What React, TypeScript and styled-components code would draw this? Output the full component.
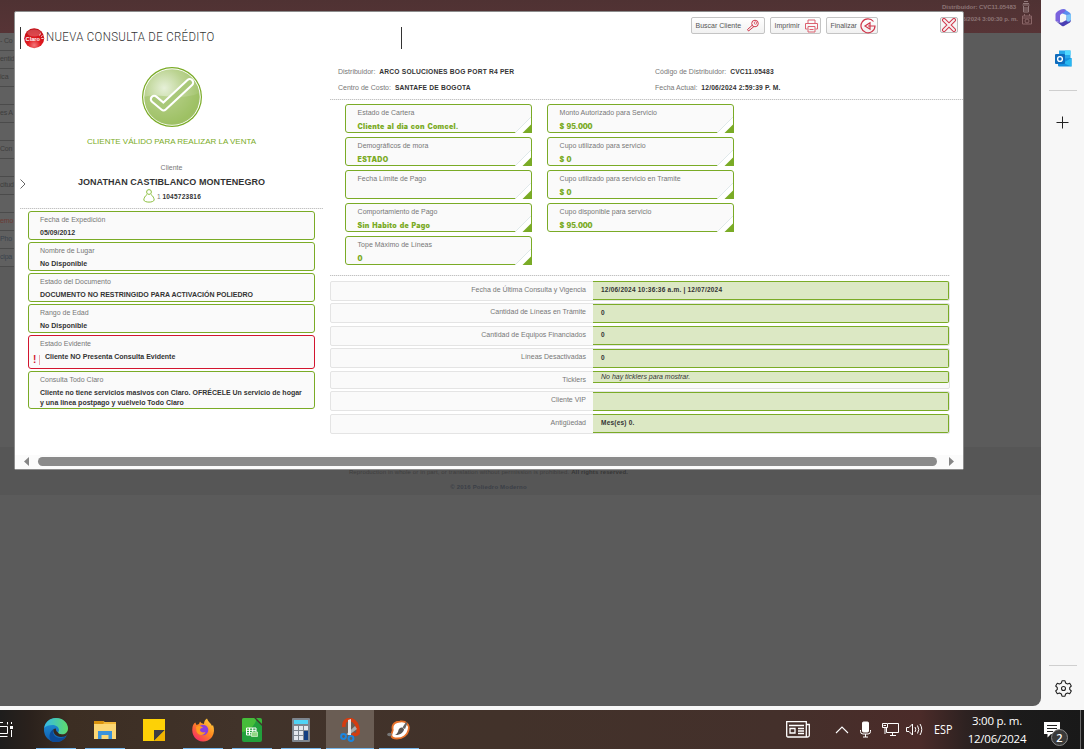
import React from "react";
import styled, { createGlobalStyle } from "styled-components";

const GREEN = "#7aab26";
const RED = "#d2152f";

const Global = createGlobalStyle`
  * { box-sizing: border-box; }
  html, body { margin: 0; padding: 0; overflow: hidden; }
  body { font-family: "Liberation Sans", Arial, sans-serif; font-size: 7px; color: #333; }
  svg { display: block; flex: none; }
`;

const Screen = styled.div`
  width: 1084px;
  height: 749px;
  display: flex;
  flex-direction: column;
  background: #f7f7f7;
`;
const Browser = styled.div`
  height: 710px;
  display: flex;
  align-items: flex-start;
`;
const Page = styled.div`
  position: relative;
  width: 1041px;
  height: 706px;
  background: #5b5b5b;
  border-bottom-right-radius: 8px;
  overflow: hidden;
  display: flex;
  flex-direction: column;
`;

/* dimmed page behind the dialog */
const PageHeader = styled.header`
  height: 33px;
  background: linear-gradient(#4f3233, #573436);
  display: flex;
  flex-direction: column;
  align-items: flex-end;
  padding: 1px 8px 0 0;
`;
const HeaderLine = styled.div`
  display: flex;
  align-items: center;
  gap: 3px;
  height: 12px;
  font-size: 6px;
  font-weight: 700;
  letter-spacing: -0.04px;
  color: #8d7576;
`;
const SideMenu = styled.nav`
  height: 414px;
  width: 14px;
  overflow: hidden;
`;
const SideItem = styled.div<{ $tone?: string }>`
  height: 18px;
  line-height: 16px;
  border-bottom: 1px solid #4b4b4b;
  background: #606060;
  font-size: 7px;
  letter-spacing: -0.2px;
  white-space: nowrap;
  color: ${(p) => p.$tone ?? "#3d3d3d"};
`;
const PageFooter = styled.footer`
  height: 48px;
  background: #565656;
  display: flex;
  flex-direction: column;
  align-items: center;
  padding: 18px 64px 0 0;
  font-size: 6px;
  line-height: 15px;
  color: #3e3e3e;
`;
const Legal = styled.div`
  letter-spacing: 0.13px;
  strong { color: #363636; }
`;
const Copyright = styled.div`
  font-weight: 700;
  color: #3b3f47;
  letter-spacing: 0.2px;
`;

/* dialog */
const Dialog = styled.section`
  position: absolute;
  left: 14px;
  top: 11px;
  width: 950px;
  height: 459px;
  background: #fff;
  border: 1px solid #8c8c8c;
  border-radius: 2px;
  display: flex;
  flex-direction: column;
`;
const DialogHeader = styled.div`
  height: 48px;
  display: flex;
  align-items: flex-start;
  padding-left: 5px;
`;
const TitleBox = styled.div`
  width: 382px;
  height: 22px;
  margin-top: 15px;
  border-left: 1px solid #333;
  border-right: 1px solid #333;
  display: flex;
  align-items: center;
  padding-left: 3px;
`;
const Title = styled.h1`
  margin: 0 0 4px 1px;
  font: 300 13.5px/20px Roboto, "Liberation Sans", sans-serif;
  letter-spacing: 0.4px;
  color: #333;
  white-space: nowrap;
  transform: scaleX(0.848);
  transform-origin: left center;
`;
const Actions = styled.div`
  display: flex;
  gap: 5px;
  margin: 5px 0 0 289px;
`;
const Action = styled.button<{ $w: number }>`
  width: ${(p) => p.$w}px;
  height: 17px;
  padding: 0 1px 0 3.5px;
  display: flex;
  align-items: center;
  justify-content: space-between;
  border: 1px solid #c4c4c4;
  border-radius: 2px;
  background: linear-gradient(#fff, #f1f1f1);
  font: 7px "Liberation Sans", Arial, sans-serif;
  color: #555;
  white-space: nowrap;
`;
const Close = styled.button`
  width: 18px;
  height: 16px;
  margin: 5px 0 0 62px;
  padding: 0;
  border: 1px solid #bcbcbc;
  border-radius: 2px;
  background: #f6f6f6;
  display: flex;
  align-items: center;
  justify-content: center;
`;
const Body = styled.div`
  height: 395px;
  display: flex;
  padding-left: 5px;
`;
const Summary = styled.div`
  width: 303px;
  display: flex;
  flex-direction: column;
  align-items: center;
`;
const Seal = styled.div`
  margin-top: 6px;
`;
const Status = styled.div`
  height: 22px;
  margin-top: 3px;
  line-height: 22px;
  font-size: 8px;
  letter-spacing: -0.01px;
  color: ${GREEN};
  white-space: nowrap;
`;
const Muted = styled.div`
  font-size: 7px;
  line-height: 10px;
  margin-top: 10px;
  color: #777;
`;
const ClientName = styled.div`
  font-size: 9px;
  font-weight: 700;
  line-height: 14px;
  margin-top: 2px;
  letter-spacing: 0.06px;
  color: #333;
  white-space: nowrap;
`;
const ClientId = styled.div`
  display: flex;
  align-items: center;
  gap: 2px;
  height: 14px;
  font-size: 6.5px;
  margin-left: 1px;
  color: #777;
  b { color: #333; letter-spacing: 0.25px; }
`;
const Dots = styled.div<{ $w: number }>`
  width: ${(p) => p.$w}px;
  height: 1px;
  flex: none;
  background: repeating-linear-gradient(90deg, #c2c2c2 0 1px, #ececec 1px 2px);
`;
const SummaryDots = styled(Dots)`
  margin-top: 5px;
`;
const CardList = styled.div`
  width: 287px;
  margin: 2px 0 0;
  display: flex;
  flex-direction: column;
  gap: 2px;
`;
const Card = styled.div<{ $h?: number; $alert?: boolean }>`
  height: ${(p) => p.$h ?? 29}px;
  border: 1px solid ${(p) => (p.$alert ? RED : GREEN)};
  border-radius: 3px;
  background: #fafafa;
  padding: 3px 10px 0 11px;
`;
const CardLabel = styled.div`
  font-size: 7px;
  line-height: 10px;
  color: #777;
  white-space: nowrap;
`;
const CardValue = styled.div`
  margin-top: 3px;
  font-size: 7px;
  line-height: 10px;
  font-weight: 700;
  color: #333;
  white-space: pre-line;
`;
const AlertValue = styled.div`
  display: flex;
  margin: 3px 0 0 -7px;
  font-size: 7px;
  line-height: 10px;
  font-weight: 700;
  color: #333;
`;
const AlertMark = styled.span`
  width: 7px;
  height: 10px;
  margin: 3px 5px 0 0;
  border-right: 1px solid #eca6ae;
  font-size: 10px;
  line-height: 10px;
  color: ${RED};
`;

const Detail = styled.div`
  width: 634px;
  margin-left: 7px;
  display: flex;
  flex-direction: column;
`;
const Facts = styled.div`
  height: 39px;
  padding: 4px 0 0 8px;
  display: grid;
  grid-template-columns: 317px 1fr;
  grid-auto-rows: 16px;
`;
const Fact = styled.div`
  font-size: 7px;
  line-height: 16px;
  color: #777;
  white-space: nowrap;
  b { color: #333; margin-left: 2px; font-size: 6.7px; letter-spacing: 0.18px; }
`;
const Quotas = styled.div`
  height: 175px;
  padding: 4px 0 0 15px;
  display: flex;
  gap: 15px;
`;
const QuotaColumn = styled.div`
  width: 187px;
  display: flex;
  flex-direction: column;
  gap: 4px;
`;
const QuotaCard = styled(Card)`
  position: relative;
  padding: 3px 0 0 11.6px;
  flex: none;
`;
const QuotaValue = styled.div<{ $amount: boolean }>`
  margin-top: 4px;
  font: 900 7px/10px Inter, "DejaVu Sans", sans-serif;
  letter-spacing: ${(p) => (p.$amount ? -0.12 : 0.26)}px;
  word-spacing: ${(p) => (p.$amount ? 1.2 : 1)}px;
  color: ${GREEN};
  white-space: nowrap;
`;
const Corner = styled.svg`
  position: absolute;
  right: -1px;
  bottom: -1px;
`;
const Table = styled.div`
  padding-top: 5px;
  width: 620px;
`;
const Row = styled.div<{ $h: number; $gap: number }>`
  height: ${(p) => p.$h}px;
  margin-bottom: ${(p) => p.$gap}px;
  border: 1px solid #e4e4e4;
  border-radius: 2px;
  background: #fafafa;
  display: flex;
`;
const RowLabel = styled.div`
  width: 262px;
  padding-right: 7px;
  text-align: right;
  font-size: 7px;
  line-height: 16px;
  color: #777;
`;
const RowValue = styled.div<{ $h: number; $drop: number; $note?: boolean }>`
  width: 356px;
  height: ${(p) => p.$h}px;
  margin-top: ${(p) => p.$drop}px;
  padding-left: 8px;
  border: solid ${GREEN};
  border-width: 1px 1px 1px 0;
  border-radius: 0 2px 2px 0;
  background: #dce8c4;
  font-size: ${(p) => (p.$note ? 7 : 6.5)}px;
  font-weight: ${(p) => (p.$note ? 400 : 700)};
  font-style: ${(p) => (p.$note ? "italic" : "normal")};
  line-height: ${(p) => (p.$note ? 10 : 16)}px;
  letter-spacing: ${(p) => (p.$note ? 0 : 0.22)}px;
  color: #333;
`;
const ScrollBar = styled.div`
  height: 14px;
  background: #fbfbfb;
  display: flex;
  align-items: flex-start;
  padding: 2px 9px 0 9px;
`;
const Thumb = styled.div`
  flex: 1;
  height: 9px;
  margin: 0 12px 0 9px;
  border-radius: 5px;
  background: #8a8a8a;
`;
const Expander = styled.svg`
  position: absolute;
  left: 5px;
  top: 167px;
`;

/* browser side strip */
const Strip = styled.aside`
  width: 43px;
  height: 706px;
  display: flex;
  flex-direction: column;
  align-items: center;
  padding: 9px 0 0 1px;
`;
const Rule = styled.div<{ $top: number }>`
  width: 28px;
  height: 1px;
  margin-top: ${(p) => p.$top}px;
  background: #cfcfcf;
`;
const StripIcon = styled.div<{ $top: number }>`
  margin-top: ${(p) => p.$top}px;
`;

/* task bar */
const TaskBar = styled.div`
  height: 39px;
  display: flex;
  align-items: stretch;
  background: linear-gradient(90deg, #1e1d1c 0, #2a211c 30px, #3c2e23 70px, #41332a 240px, #42322a 500px, #44302b 780px, #4b2b29 920px, #2e2221 965px, #1c1b1b 1010px, #191919 1084px);
`;
const Apps = styled.div`
  display: flex;
  width: 786px;
`;
const TaskView = styled.div`
  width: 32px;
  padding-top: 12px;
`;
const TaskApp = styled.div<{ $open?: boolean; $active?: boolean }>`
  width: ${(p) => (p.$active ? 48 : 49)}px;
  margin-right: ${(p) => (p.$active ? 1 : 0)}px;
  padding: 8px ${(p) => (p.$active ? 0 : 1)}px 0 0;
  display: flex;
  flex-direction: column;
  align-items: center;
  justify-content: space-between;
  background: ${(p) => (p.$active ? "#6a5d54" : "transparent")};
  &::after {
    content: "";
    width: ${(p) => (p.$active ? 48 : 40)}px;
    height: 1px;
    background: ${(p) => (p.$open ? "#78b8ec" : "transparent")};
  }
`;
const Tray = styled.div`
  flex: 1;
  display: flex;
  align-items: center;
  color: #fff;
`;
const TrayItem = styled.div<{ $w: number }>`
  width: ${(p) => p.$w}px;
  flex: none;
`;
const Lang = styled.div`
  width: 31px;
  font: 12px "Open Sans", "Noto Sans", sans-serif;
  transform: scaleX(0.9);
  transform-origin: left;
`;
const Clock = styled.div`
  width: 66px;
  margin: 0 0 0 -1px;
  text-align: center;
  font: 11.5px/18px "Open Sans", "Noto Sans", sans-serif;
  white-space: nowrap;
  letter-spacing: -0.25px;
`;
const Notices = styled.div`
  position: relative;
  width: 20px;
  height: 39px;
  margin-left: 14px;
  padding-top: 12px;
`;
const Badge = styled.span`
  position: absolute;
  left: 7px;
  top: 19px;
  width: 17px;
  height: 17px;
  border-radius: 50%;
  border: 1px solid #8a8a8a;
  background: #3a3a3a;
  font: 600 11px/15px "Open Sans", sans-serif;
  text-align: center;
`;
const DesktopEdge = styled.div`
  margin-left: 16px;
  width: 1px;
  align-self: stretch;
  background: #6a6a6a;
`;

const menu: { text: string; tone?: string }[] = [
  { text: "- Co" }, { text: "entid" }, { text: "ica" }, { text: "" },
  { text: "es A" }, { text: "" }, { text: "Con" }, { text: "" },
  { text: "citud" }, { text: "" }, { text: "erno", tone: "#6b3a34" },
  { text: "Pho", tone: "#39424d" }, { text: "cipa", tone: "#39424d" },
];

const quotaLeft = [
  ["Estado de Cartera", "Cliente al dia con Comcel."],
  ["Demográficos de mora", "ESTADO"],
  ["Fecha Límite de Pago", ""],
  ["Comportamiento de Pago", "Sin Habito de Pago"],
  ["Tope Máximo de Líneas", "0"],
];
const quotaRight = [
  ["Monto Autorizado para Servicio", "$ 95.000"],
  ["Cupo utilizado para servicio", "$ 0"],
  ["Cupo utilizado para servicio en Tramite", "$ 0"],
  ["Cupo disponible para servicio", "$ 95.000"],
];

const rows = [
  { label: "Fecha de Última Consulta y Vigencia", value: "12/06/2024 10:36:36 a.m. | 12/07/2024", h: 20, gap: 2, drop: -1, vh: 19 },
  { label: "Cantidad de Líneas en Trámite", value: "0", h: 20, gap: 3, drop: 0, vh: 19 },
  { label: "Cantidad de Equipos Financiados", value: "0", h: 20, gap: 2, drop: -1, vh: 19 },
  { label: "Líneas Desactivadas", value: "0", h: 20, gap: 3, drop: 0, vh: 19 },
  { label: "Ticklers", value: "No hay ticklers para mostrar.", h: 18, gap: 2, drop: -1, vh: 12, note: true },
  { label: "Cliente VIP", value: "", h: 20, gap: 3, drop: 0, vh: 19 },
  { label: "Antigüedad", value: "Mes(es) 0.", h: 20, gap: 0, drop: -1, vh: 19 },
];

const Quota = ({ label, value }: { label: string; value: string }) => (
  <QuotaCard>
    <CardLabel>{label}</CardLabel>
    <QuotaValue $amount={value.startsWith("$")}>{value}</QuotaValue>
    <Corner width="17" height="17" viewBox="0 0 17 17">
      <path d="M0 17L16 1V17Z" fill="#fff" />
      <path d="M0.5 16.5L16 1" stroke="#dfe8ea" />
      <path d="M16.5 0V10" stroke={GREEN} />
      <path d="M7.500 17L17 7.500V17Z" fill={GREEN} />
    </Corner>
  </QuotaCard>
);

const CheckSeal = () => (
  <svg width="62" height="62" viewBox="0 0 62 62">
    <defs>
      <radialGradient id="seal" cx="0.36" cy="0.34" r="0.65">
        <stop offset="0" stopColor="#e6f0d8" />
        <stop offset="0.55" stopColor="#bbd391" />
        <stop offset="1" stopColor="#a3c46d" />
      </radialGradient>
    </defs>
    <circle cx="31" cy="31" r="30" fill={GREEN} />
    <circle cx="31" cy="31" r="28.8" fill="#fff" />
    <circle cx="31" cy="31" r="27.8" fill="url(#seal)" />
    <path d="M3.5 31C16 26 40 36 58 27C60 45 48 58.8 31 58.8C14 58.8 3 46 3.5 31Z" fill="#96bb58" opacity="0.4" />
    <path d="M13.2 33.2L22.500 41L48.8 16.500" fill="none" stroke="#fff" strokeWidth="8.8" strokeLinecap="round" strokeLinejoin="round" />
    <path d="M13.2 33.2L22.500 41L48.8 16.500" fill="none" stroke="#a9c879" strokeWidth="4.6" strokeLinecap="round" strokeLinejoin="round" />
  </svg>
);

const ClaroLogo = () => (
  <svg width="21" height="21" viewBox="0 0 21 21">
    <defs>
      <radialGradient id="claro" cx="0.5" cy="0.85" r="0.8">
        <stop offset="0" stopColor="#f4777a" />
        <stop offset="0.4" stopColor="#e0191f" />
        <stop offset="1" stopColor="#c20d14" />
      </radialGradient>
    </defs>
    <circle cx="10.2" cy="10.2" r="10" fill="url(#claro)" />
    <ellipse cx="10.2" cy="5" rx="7" ry="3.5" fill="#fff" opacity="0.22" />
    <text x="1.6" y="12.6" fontSize="5.6" fontWeight="700" fill="#fff" fontFamily="Liberation Sans">Claro</text>
    <path d="M15.5 7.5L16.5 5.5M17 8.7L18.5 7.5M17.3 10.5H19.6" stroke="#fff" strokeWidth="0.8" />
  </svg>
);

const Edge = () => (
  <svg width="24" height="24" viewBox="0 0 24 24">
    <defs>
      <linearGradient id="eg" x1="0" x2="1"><stop offset="0" stopColor="#35b8e8" /><stop offset="1" stopColor="#5fdc6a" /></linearGradient>
      <linearGradient id="eb" x1="0" x2="0" y1="0" y2="1"><stop offset="0" stopColor="#2199dc" /><stop offset="1" stopColor="#0f5cae" /></linearGradient>
    </defs>
    <circle cx="12" cy="12" r="12" fill="url(#eb)" />
    <path d="M14 14.6C15 18 20 19 22.6 17.4L24.5 14V11L18 12Z" fill="#3c2e23" />
    <path d="M0.2 10C1 4 6 0 12 0C19 0 24 5 24 10.5C24 14 21.5 16.3 18 16.3C15.5 16.3 14 15.5 14 14.6C14 14 15 13.5 15 12C15 9.5 12.5 7 8.5 7C5 7 1.5 8 0.2 10Z" fill="url(#eg)" />
    <path d="M9 24C4 22 4.5 14 9.5 11C7.5 16 12 20.5 17 20C19.5 19.7 21 19 22 18.2C20 22 15 25 9 24Z" fill="#0c4a97" />
    <path d="M9.5 11C8.5 15 12 19 17 19C19.5 19 21.5 18.2 22.6 17.3C19 18 14.6 17 14 14.6C12.5 13.5 11.5 12 12 10.5Z" fill="#33271f" />
  </svg>
);
const Folder = () => (
  <svg width="22" height="24" viewBox="0 0 22 24">
    <path d="M0 3H9L11 4H22V21H0Z" fill="#f3b93b" />
    <path d="M0 3H9L10 5L9 6H0Z" fill="#d9930e" />
    <path d="M0 6H22V21H0Z" fill="#fbd775" />
    <path d="M4 13H18V21H14.5V17H7.5V21H4Z" fill="#3a93dc" />
  </svg>
);
const Sticky = () => (
  <svg width="22" height="24" viewBox="0 0 22 24">
    <path d="M0 1H22V23H0Z" fill="#fdd106" />
    <path d="M11 12H22L11 23Z" fill="#3d3d42" />
    <path d="M22 12V23H11Z" fill="#f0b400" />
  </svg>
);
const Firefox = () => (
  <svg width="24" height="24" viewBox="0 0 24 24">
    <defs><linearGradient id="ff" x1="1" y1="0" x2="0.2" y2="1"><stop offset="0" stopColor="#ffe14a" /><stop offset="0.5" stopColor="#ff8a1e" /><stop offset="1" stopColor="#f5276a" /></linearGradient></defs>
    <path d="M1.5 9C2 7 3 5 4.3 4.5L5.5 7L8 6L9 3.5C10 5 11 5.5 13 6C13 3.5 14 1.5 16 0.5C17 4 20 5 21 8L22 7C23.5 11 23.5 15 21 19C18.5 22.5 15 23.6 12 23.5C5 23.5 0 17 1.5 9Z" fill="url(#ff)" />
    <circle cx="12" cy="12" r="5.3" fill="#8a3fdd" />
    <path d="M5 9C7 7.5 10 8 12 9.5C10 10 9 11 9 12C9 14 12 15 14.5 14C13 18 7 18 5.5 13.5Z" fill="#ff9a20" />
  </svg>
);
const LibreCalc = () => (
  <svg width="20" height="24" viewBox="0 0 20 24">
    <path d="M2 0H12L20 8V22Q20 24 18 24H2Q0 24 0 22V2Q0 0 2 0Z" fill="#22a03c" />
    <path d="M0 14C8 14 14 5 14 2L12 0H2Q0 0 0 2Z" fill="#46bd3a" />
    <path d="M14 0H18Q20 0 20 2V6Z" fill="#37b53a" />
    <path d="M4.5 10H14V17H4.5ZM4.5 12.3H14M4.5 14.7H14M7.5 10V17M10.7 10V17" fill="none" stroke="#fff" />
    <path d="M9.5 14H15.5V18.5H9.5Z" fill="#8fd884" stroke="#d8f3d4" strokeWidth="0.7" />
  </svg>
);
const Calculator = () => (
  <svg width="18" height="24" viewBox="0 0 18 24">
    <rect width="18" height="24" rx="1" fill="#7d858e" />
    <rect x="2" y="2" width="14" height="4" fill="#4fd3f5" />
    {[8, 13, 18].map((y) => [2, 7].map((x) => <rect key={`${x}-${y}`} x={x} y={y} width="4" height="4" fill="#e3e8ee" />))}
    <rect x="12" y="8" width="4" height="4" fill="#e3e8ee" />
    <rect x="12" y="13" width="4" height="9" fill="#123f83" />
  </svg>
);
const Snip = () => (
  <svg width="20" height="24" viewBox="0 0 20 24">
    <path d="M4 9C3 3 7 1.500 10 1.500C15 2 19 8 18 15C17 17 14 17 12 15.500" fill="none" stroke="#d43c10" strokeWidth="3.6" />
    <path d="M15 8L6 16.500L9 17L17 11Z" fill="#a9adb0" />
    <path d="M8 2L11 1V17H8Z" fill="#e4e4e4" />
    <circle cx="3.5" cy="18.5" r="2.4" fill="none" stroke="#1a86e0" strokeWidth="2" />
    <circle cx="11" cy="20.5" r="2.4" fill="none" stroke="#1a86e0" strokeWidth="2" />
  </svg>
);
const Painter = () => (
  <svg width="24" height="24" viewBox="0 0 24 24">
    <path d="M4.500 18C3.500 15 7 13.500 5.500 10.500C5 6 9 3.500 13 3.500C19 2.500 23 7 21.500 12C20.500 17 16 20.500 10 20.500C7 20.500 5 20 4.500 18Z" fill="#fff" stroke="#e8722a" strokeWidth="1.8" />
    <path d="M11.500 12C12.500 9 15.500 8.500 17 11C17 14.500 12.500 17.500 8 17C10 16 11 14.500 11.500 12Z" fill="#5a5552" />
    <path d="M15.500 9.500L19 4L20.500 5L18 11Z" fill="#666" />
    <ellipse cx="2.500" cy="16.500" rx="2.300" ry="1.700" fill="#777" />
  </svg>
);

export default function App() {
  return (
    <Screen>
      <Global />
      <Browser>
        <Page>
          <PageHeader>
            <HeaderLine>
              Distribuidor: CVC11.05483
              <svg width="14" height="12" viewBox="0 0 14 12" fill="none" stroke="#927a7b"><path d="M4 2.5H10M5 0.5H9M3.5 4H10.5M4.5 5V11H9.5V5M6 6V10M8 6V10" /></svg>
            </HeaderLine>
            <HeaderLine>
              12/06/2024 3:00:30 p. m.
              <svg width="12" height="11" viewBox="0 0 12 11" fill="none" stroke="#8b6768"><path d="M1.5 2H10.5V10H1.5ZM1.5 4H10.5M3.5 0V2M8.5 0V2" /><circle cx="6" cy="7" r="2" /></svg>
            </HeaderLine>
          </PageHeader>
          <SideMenu>
            {menu.map((m, i) => <SideItem key={i} $tone={m.tone}>{m.text}</SideItem>)}
          </SideMenu>
          <PageFooter>
            <Legal>Reproduction in whole or in part, or translation without permission is prohibited. <strong>All rights reserved.</strong></Legal>
            <Copyright>© 2016 Poliedro Moderno</Copyright>
          </PageFooter>

          <Dialog>
            <DialogHeader>
              <TitleBox>
                <ClaroLogo />
                <Title>NUEVA CONSULTA DE CRÉDITO</Title>
              </TitleBox>
              <Actions>
                <Action $w={74}>
                  Buscar Cliente
                  <svg width="17" height="13" viewBox="0 0 17 13" fill="none" stroke="#d0374b"><circle cx="9" cy="4.5" r="3.3" /><circle cx="9.5" cy="4" r="1.3" strokeWidth="0.7" /><path d="M6.5 6L1.5 10.5L2.5 12L8 7.5" /></svg>
                </Action>
                <Action $w={51}>
                  Imprimir
                  <svg width="15" height="14" viewBox="0 0 15 14" fill="none" stroke="#dc6270"><path d="M4 4V1H11V4M3.5 10H1.5V4.5H13.5V10H11.5M4 7.5H11V13H4ZM5.5 10.5H9.5" /></svg>
                </Action>
                <Action $w={52}>
                  Finalizar
                  <svg width="17" height="16" viewBox="0 0 17 16" fill="none" stroke="#d0374b" strokeWidth="1.2"><path d="M14.5 3.5A7 7 0 1 0 16 8H9M11 4.8L6 8L11 11.2Z" /></svg>
                </Action>
              </Actions>
              <Close>
                <svg width="16" height="14" viewBox="0 0 16 14"><path d="M3 2L13 12M13 2L3 12" stroke="#d0374b" strokeWidth="4" strokeLinecap="round" /><path d="M3 2L13 12M13 2L3 12" stroke="#f6f0f0" strokeWidth="2" strokeLinecap="round" /></svg>
              </Close>
            </DialogHeader>
            <Body>
              <Summary>
                <Seal><CheckSeal /></Seal>
                <Status>CLIENTE VÁLIDO PARA REALIZAR LA VENTA</Status>
                <Muted>Cliente</Muted>
                <ClientName>JONATHAN CASTIBLANCO MONTENEGRO</ClientName>
                <ClientId>
                  <svg width="12" height="14" viewBox="0 0 12 14" fill="none" stroke="#8cbf3f"><circle cx="6" cy="3" r="2.4" /><path d="M4 5.5C2 7 1 9 0.8 11C1.5 13.8 10.5 13.8 11.2 11C11 9 10 7 8 5.5" /></svg>
                  <span>1 <b>1045723816</b></span>
                </ClientId>
                <SummaryDots $w={303} />
                <CardList>
                  <Card><CardLabel>Fecha de Expedición</CardLabel><CardValue>05/09/2012</CardValue></Card>
                  <Card><CardLabel>Nombre de Lugar</CardLabel><CardValue>No Disponible</CardValue></Card>
                  <Card><CardLabel>Estado del Documento</CardLabel><CardValue>DOCUMENTO NO RESTRINGIDO PARA ACTIVACIÓN POLIEDRO</CardValue></Card>
                  <Card><CardLabel>Rango de Edad</CardLabel><CardValue>No Disponible</CardValue></Card>
                  <Card $h={34} $alert>
                    <CardLabel>Estado Evidente</CardLabel>
                    <AlertValue><AlertMark>!</AlertMark>Cliente NO Presenta Consulta Evidente</AlertValue>
                  </Card>
                  <Card $h={38}>
                    <CardLabel>Consulta Todo Claro</CardLabel>
                    <CardValue>{"Cliente no tiene servicios masivos con Claro. OFRÉCELE Un servicio de hogar\ny una linea postpago y vuélvelo Todo Claro"}</CardValue>
                  </Card>
                </CardList>
              </Summary>
              <Detail>
                <Facts>
                  <Fact>Distribuidor: <b>ARCO SOLUCIONES BOG PORT R4 PER</b></Fact>
                  <Fact>Código de Distribuidor: <b>CVC11.05483</b></Fact>
                  <Fact>Centro de Costo: <b>SANTAFE DE BOGOTA</b></Fact>
                  <Fact>Fecha Actual: <b>12/06/2024 2:59:39 P. M.</b></Fact>
                </Facts>
                <Dots $w={633} />
                <Quotas>
                  <QuotaColumn>{quotaLeft.map(([l, v]) => <Quota key={l} label={l} value={v} />)}</QuotaColumn>
                  <QuotaColumn>{quotaRight.map(([l, v]) => <Quota key={l} label={l} value={v} />)}</QuotaColumn>
                </Quotas>
                <Dots $w={620} />
                <Table>
                  {rows.map((r) => (
                    <Row key={r.label} $h={r.h} $gap={r.gap}>
                      <RowLabel>{r.label}</RowLabel>
                      <RowValue $h={r.vh} $drop={r.drop} $note={r.note}>{r.value}</RowValue>
                    </Row>
                  ))}
                </Table>
              </Detail>
            </Body>
            <ScrollBar>
              <svg width="5" height="9" viewBox="0 0 5 9"><path d="M5 0V9L0 4.5Z" fill="#858585" /></svg>
              <Thumb />
              <svg width="5" height="9" viewBox="0 0 5 9"><path d="M0 0V9L5 4.5Z" fill="#858585" /></svg>
            </ScrollBar>
            <Expander width="6" height="10" viewBox="0 0 6 10" fill="none" stroke="#666"><path d="M0.5 0.5L5 5L0.5 9.5" /></Expander>
          </Dialog>
        </Page>

        <Strip>
          <svg width="18" height="18" viewBox="0 0 18 18">
            <path d="M6 1L10 0L15.5 3.5Q17 4.5 17 6V11L12.5 8.5V6L7 4Z" fill="#5a8df0" />
            <path d="M6 1Q1.5 3 1.5 5.5V12L6 13.5V7Q6 5 10 3.5L12 0.8Q9 -0.5 6 1Z" fill="#7a62dd" />
            <path d="M1.5 12L8 17Q9 17.5 10 17L16 13.5Q17 12.5 17 10.5L12.5 8.5V11L8 13.5Q4 14 1.5 12Z" fill="#4a3fb4" />
            <path d="M12.5 6L17 5V11Q15 14 12.5 12Z" fill="#7cc4f7" />
          </svg>
          <StripIcon $top={23}>
            <svg width="17" height="17" viewBox="0 0 17 17">
              <path d="M4 0.5H15.5V9H4Z" fill="#28a8ea" />
              <path d="M10 0.5H15.5V5H10Z" fill="#50d9ff" />
              <path d="M3 9L16.5 8V16.5H4Q3 16.5 3 15.5Z" fill="#1490df" />
              <path d="M16.5 8L8 13L16.5 16.5Z" fill="#28b8f0" />
              <rect x="0" y="4" width="10" height="10" rx="1" fill="#0f6cbd" />
              <circle cx="5" cy="9" r="2.4" fill="none" stroke="#fff" strokeWidth="1.4" />
            </svg>
          </StripIcon>
          <Rule $top={23} />
          <StripIcon $top={25}>
            <svg width="14" height="13" viewBox="0 0 14 13" stroke="#222"><path d="M6.5 0.5V12.5M0.5 6.5H12.5" /></svg>
          </StripIcon>
          <Rule $top={536} />
          <StripIcon $top={14}>
            <svg width="17" height="17" viewBox="0 0 17 17" fill="none" stroke="#222" strokeWidth="1.1" strokeLinejoin="round">
              <path d="M7 0.8H10L10.6 3L12.5 4L14.7 3.3L16.3 6L14.7 7.6V9.4L16.3 11L14.7 13.7L12.5 13L10.6 14L10 16.2H7L6.4 14L4.5 13L2.3 13.7L0.7 11L2.3 9.4V7.6L0.7 6L2.3 3.3L4.5 4L6.4 3Z" />
              <circle cx="8.5" cy="8.5" r="2" />
            </svg>
          </StripIcon>
        </Strip>
      </Browser>

      <TaskBar>
        <Apps>
          <TaskView>
            <svg width="14" height="16" viewBox="0 0 14 16" fill="none" stroke="#fff"><path d="M0 4.5H7.5V11.5H0M0 0.5H3M7.5 0V2.5M0 14.5H7.5M11.5 0V2M11.5 8V15" /><path d="M10 5.5H13" strokeWidth="3" /></svg>
          </TaskView>
          <TaskApp $open><Edge /></TaskApp>
          <TaskApp $open><Folder /></TaskApp>
          <TaskApp><Sticky /></TaskApp>
          <TaskApp $open><Firefox /></TaskApp>
          <TaskApp $open><LibreCalc /></TaskApp>
          <TaskApp $open><Calculator /></TaskApp>
          <TaskApp $open $active><Snip /></TaskApp>
          <TaskApp $open><Painter /></TaskApp>
        </Apps>
        <Tray>
          <TrayItem $w={49}>
            <svg width="24" height="17" viewBox="0 0 24 17" fill="none" stroke="#fff"><path d="M0.7 0.7H20.3V16H2Q0.7 16 0.7 14.5ZM20.3 3.5H23.3V14.5Q23.3 16 21.5 16H19" strokeWidth="1.3" /><path d="M3 4.5H18M12 7.5H18M12 10H18M12 12.5H18M4 7.5H9V12H4Z" strokeWidth="1.3" /></svg>
          </TrayItem>
          <TrayItem $w={25}><svg width="14" height="8" viewBox="0 0 14 8" fill="none" stroke="#fff" strokeWidth="1.1"><path d="M1 7L7 1L13 7" /></svg></TrayItem>
          <TrayItem $w={22}><svg width="11" height="17" viewBox="0 0 11 17" fill="none" stroke="#fff"><rect x="2.5" y="1" width="6" height="10" rx="1" fill="#fff" /><path d="M0.5 9V10.5Q0.5 13 3 13H8Q10.5 13 10.5 10.5V9M5.5 13V16M3 16H8" /></svg></TrayItem>
          <TrayItem $w={24}><svg width="17" height="15" viewBox="0 0 17 15" fill="none" stroke="#fff"><path d="M6 1.5H16.5V10.5H4.5V6M8 13.5H14M10.5 10.5V13.5M0.5 1.5H5.5V5.5H0.5ZM3 5.5V12M1.5 3.5H4" /></svg></TrayItem>
          <TrayItem $w={28}><svg width="18" height="15" viewBox="0 0 18 15" fill="none" stroke="#fff"><path d="M0.5 5.5H3L6.5 2V13L3 9.5H0.5ZM9 5Q10.5 7.5 9 10M11.5 3.5Q14 7.5 11.5 11.5M14 2Q17.5 7.5 14 13" /></svg></TrayItem>
          <Lang>ESP</Lang>
          <Clock>3:00 p. m.<br />12/06/2024</Clock>
          <Notices>
            <svg width="17" height="16" viewBox="0 0 17 16"><path d="M0 0H16V12H7L3.5 15.5V12H0Z" fill="#fff" /><path d="M3 3.5H13M3 6.5H13M3 9.5H9" stroke="#222" /></svg>
            <Badge>2</Badge>
          </Notices>
          <DesktopEdge />
        </Tray>
      </TaskBar>
    </Screen>
  );
}
